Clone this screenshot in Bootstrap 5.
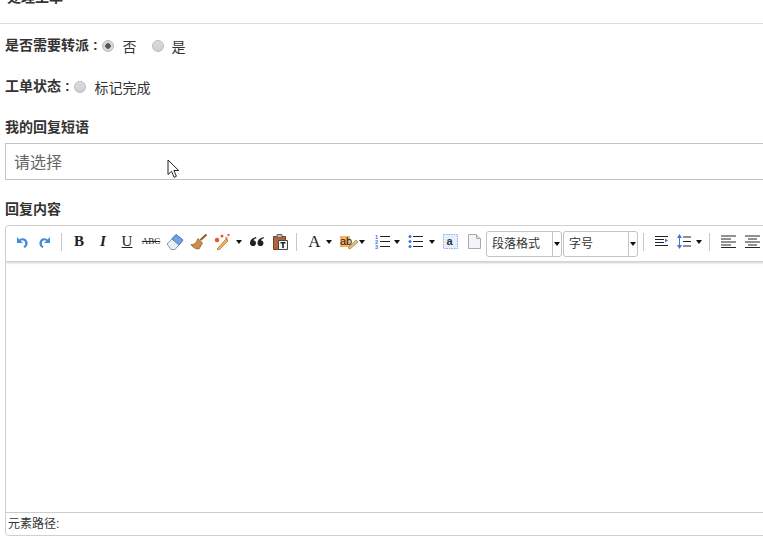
<!DOCTYPE html>
<html lang="en">
<head>
  <meta charset="UTF-8" />
  <title>处理工单</title>
  <link href="https://cdn.jsdelivr.net/npm/bootstrap@5.3.0/dist/css/bootstrap.min.css" rel="stylesheet" />
  <style>
    html, body { height: 537px; overflow: hidden; background: #fff; }
    body { font-family: "Liberation Sans", "Noto Sans CJK SC", sans-serif; font-size: 14px; color: #333; position: relative; }
    .page-wrap { width: 810px; margin-top: -12px; padding-left: 5px; }
    .page-head { height: 36px; margin-left: -5px; padding-left: 7px; border-bottom: 1px solid #ddd; font-weight: 700; font-size: 14px; line-height: 18px; }
    .field-row { height: 20px; line-height: 20px; }
    .field-label { font-weight: 700; color: #333; font-size: 14px; }
    .field-row > .field-label { margin-bottom: 2px; }
    .radio-text { margin-top: 2px; }
    .row-send { margin-top: 12px; }
    .row-state { margin-top: 21px; }
    .row-phrase { margin-top: 20px; }
    .row-reply { margin-top: 19px; }
    .fake-radio { appearance: none; width: 12px; height: 12px; border-radius: 50%; border: 1px solid #bbb; background: linear-gradient(#dcdcdc, #cfcfcf); flex: none; margin: 0 9px 0 4px; }
    .fake-radio:checked { background: radial-gradient(circle, #555 0 2.5px, #d8d8d8 3px); }
    .second-radio { margin-left: 15px; margin-right: 8px; }
    .phrase-box { height: 37px; margin-top: 6px; border: 1px solid #c4c4c4; padding-left: 8px; line-height: 37px; font-size: 16px; color: #666; }
    .editor-box { height: 311px; margin-top: 6px; border: 1px solid #d0d0d0; border-radius: 4px; display: flex; flex-direction: column; }
    .editor-bar { height: 36px; flex: none; padding-left: 4px; border-bottom: 1px solid #d4d4d4; box-shadow: 0 1px 2px #ccc; }
    .editor-body { flex: 1; }
    .editor-foot { height: 23px; flex: none; border-top: 1px solid #ccc; padding-left: 2px; font-size: 12px; line-height: 22px; color: #333; }
    .tool { width: 24px; height: 20px; flex: none; display: flex; align-items: center; justify-content: center; font-family: "Liberation Serif", serif; color: #222; font-size: 15px; line-height: 1; margin-bottom: 4px; }
    .tool-sm { width: 23px; }
    .tool-arrow { width: 0; height: 0; flex: none; border: 3px solid transparent; border-top: 4px solid #111; border-bottom: 0; margin: 0 1px 4px; }
    .tool-sep { width: 1px; height: 18px; flex: none; background: #c8c8c8; margin-bottom: 4px !important; }
    .combo { height: 26px; flex: none; border: 1px solid #c4c4c4; border-radius: 3px; display: flex; font-size: 12px; color: #333; line-height: 25px; }
    .combo-text { padding-left: 5px; border-right: 1px solid #c4c4c4; }
    .combo-drop { width: 8px; display: flex; align-items: center; justify-content: center; }
    .mouse-arrow { position: absolute; left: 167px; top: 159px; }
  </style>
</head>
<body>
  <div class="page-wrap">
    <div class="page-head">处理工单</div>

    <div class="field-row row-send d-flex align-items-center">
      <span class="field-label">是否需要转派 :</span>
      <input class="fake-radio" type="radio" name="send" checked />
      <span class="radio-text">否</span>
      <input class="fake-radio second-radio" type="radio" name="send" />
      <span class="radio-text">是</span>
    </div>

    <div class="field-row row-state d-flex align-items-center">
      <span class="field-label">工单状态 :</span>
      <input class="fake-radio" type="radio" />
      <span class="radio-text">标记完成</span>
    </div>

    <div class="field-row row-phrase field-label">我的回复短语</div>
    <div class="phrase-box">请选择</div>

    <div class="field-row row-reply field-label">回复内容</div>
    <div class="editor-box">
      <div class="editor-bar d-flex align-items-center">
        <span class="tool tool-sm"><svg width="16" height="16" viewBox="1 0 16 16"><path d="M4 3v6h6L7.600 6.800C9.500 5.600 12 6.600 12.200 9c.1 1.300-.5 2.600-1.700 3.500l1 1.500c2.500-1.300 3.500-3.500 3-5.800C13.700 4.500 9.500 3 6.400 5.600z" fill="#3f8ddb"/></svg></span>
        <span class="tool tool-sm"><svg width="16" height="16" viewBox="-1 0 16 16"><path d="M12 3v6H6l2.400-2.200C6.500 5.600 4 6.600 3.800 9c-.1 1.300.5 2.600 1.700 3.500l-1 1.500C2 12.700 1 10.500 1.500 8.200 2.300 4.500 6.500 3 9.600 5.600z" fill="#3f8ddb"/></svg></span>
        <span class="tool-sep" style="margin:0 5px"></span>
        <span class="tool fw-bold">B</span>
        <span class="tool fst-italic fw-bold">I</span>
        <span class="tool text-decoration-underline">U</span>
        <span class="tool text-decoration-line-through" style="font-size:9px">ABC</span>
        <span class="tool"><svg width="18" height="18" viewBox="0 0 18 18"><path d="M1 11 10 1.500 17 7l-8 9.500H5z" fill="#eeeef2" stroke="#8a94a8"/><path d="M6 6 10 1.500 17 7l-4 5z" fill="#6fa5e8" stroke="#4d7fc0"/></svg></span>
        <span class="tool"><svg width="18" height="18" viewBox="0 0 18 18"><path d="M16.500 1.500 10.500 7" stroke="#8a5a2a" stroke-width="2"/><path d="M8 5.500 12.500 10 9 16c-3 .2-6.500-1.500-8-4.500 3 .5 5-1 7-6z" fill="#c98d4d" stroke="#8a5a2a" stroke-width=".7"/></svg></span>
        <span class="tool" style="width:20px;margin-left:1px"><svg width="18" height="18" viewBox="0 0 18 18"><path d="M4 16 13 6l2 2-9 9z" fill="#efb45a" stroke="#a8702c" stroke-width=".7"/><path d="M12 3l1 1.500L14.800 4 14 5.700l1 1.300-1.800-.3" fill="#e0592a"/><circle cx="4" cy="7" r="2.200" fill="#e0592a"/><circle cx="9" cy="3" r="1.500" fill="#e0592a"/><circle cx="15.500" cy="2" r="1.200" fill="#d85a9a"/></svg></span>
        <span class="tool-arrow" style="margin-left:4px"></span>
        <span class="tool" style="width:22px;margin-left:3px"><svg width="14" height="9" viewBox="0 0 14 9"><path d="M6 0C2.500 1 0 3 0 6a3 3 0 1 0 3.500-2.800C4 2.300 5 1.600 6.500 1.200zM13.500 0C10 1 7.500 3 7.500 6a3 3 0 1 0 3.500-2.800c.5-.9 1.500-1.600 3-2z" fill="#222"/></svg></span>
        <span class="tool"><svg width="15" height="16" viewBox="0 0 15 16"><path d="M.5 2.500h12v13H.5z" fill="#b5623a" stroke="#7a3f22"/><path d="M4 .5h5v3H4z" fill="#bbb" stroke="#666"/><path d="M5.500 6.500h9v9h-9z" fill="#f4f4f4" stroke="#444"/><path d="M7.500 8h5v1.500h-1.700V14H9.200V9.500H7.500z" fill="#222"/></svg></span>
        <span class="tool-sep" style="margin:0 7px 0 4px"></span>
        <span class="tool" style="width:21px;font-size:17px">A</span>
        <span class="tool-arrow" style="margin-left:1px;margin-right:4px"></span>
        <span class="tool" style="width:23px"><svg width="20" height="16" viewBox="-1 0 20 16"><path d="M1 2h10v11H1z" fill="#f5b35f"/><text x="1" y="11" font-size="11" font-family="Liberation Sans" fill="#222">ab</text><path d="M9 14l8-8 2 2-8 7z" fill="#e8c070" stroke="#8a6a2a" stroke-width=".6"/></svg></span>
        <span class="tool-arrow" style="margin-left:0;margin-right:7px"></span>
        <span class="tool" style="width:21px"><svg width="15" height="15" viewBox="0 0 15 15"><path d="M5 2.500h10M5 7.500h10M5 12.500h10" stroke="#222"/><text x="0" y="5" font-size="5.500" font-weight="700" font-family="Liberation Sans" fill="#3f74e0">1</text><text x="0" y="10" font-size="5.500" font-weight="700" font-family="Liberation Sans" fill="#3f74e0">2</text><text x="0" y="15" font-size="5.500" font-weight="700" font-family="Liberation Sans" fill="#3f74e0">3</text></svg></span>
        <span class="tool-arrow" style="margin-left:1px;margin-right:5px"></span>
        <span class="tool" style="width:21px;margin-right:-1px"><svg width="15" height="15" viewBox="0 0 15 15"><path d="M5 2.500h10M5 7.500h10M5 12.500h10" stroke="#222"/><circle cx="2" cy="2.500" r="1.500" fill="#3f74e0"/><circle cx="2" cy="7.500" r="1.500" fill="#3f74e0"/><circle cx="2" cy="12.500" r="1.500" fill="#3f74e0"/></svg></span>
        <span class="tool-arrow" style="margin-left:4px;margin-right:3px"></span>
        <span class="tool" style="width:24px"><svg width="15" height="15" viewBox="0 0 15 15"><rect x=".5" y=".5" width="14" height="14" fill="#e6eefb" stroke="#8fb0e8" stroke-dasharray="1.500 1"/><text x="3.500" y="11" font-size="11" font-weight="700" font-family="Liberation Sans" fill="#333">a</text></svg></span>
        <span class="tool" style="width:24px"><svg width="13" height="15" viewBox="0 0 13 15"><path d="M.5.500h8l4 4v10H.5z" fill="#f2f4fa" stroke="#aaa"/><path d="M8.500.5v4h4" fill="#dde" stroke="#aaa"/></svg></span>
        <span class="combo" style="width:76px"><span class="combo-text" style="width:66px">段落格式</span><span class="combo-drop"><span class="tool-arrow m-0"></span></span></span>
        <span class="combo" style="width:75px;margin-left:1px"><span class="combo-text" style="width:65px">字号</span><span class="combo-drop"><span class="tool-arrow m-0"></span></span></span>
        <span class="tool-sep" style="margin:0 7px 0 5px"></span>
        <span class="tool" style="width:21px"><svg width="14" height="14" viewBox="0 0 14 14"><path d="M0 1.500h13M0 4.500h9M0 7.500h9M0 10.500h13" stroke="#222" stroke-width="1.200"/><path d="M10 3.500v4l3-2z" fill="#3f74e0"/></svg></span>
        <span class="tool" style="width:24px"><svg width="14" height="15" viewBox="0 0 14 15"><path d="M6 3h8M6 7.500h8M6 12h8" stroke="#222"/><path d="M2.500 0l2.500 4H0zM2.500 15l2.500-4H0z" fill="#3f74e0"/><path d="M2 4h1v7H2z" fill="#3f74e0"/></svg></span>
        <span class="tool-arrow" style="margin-left:0"></span>
        <span class="tool-sep" style="margin:0 6px 0 6px"></span>
        <span class="tool"><svg width="15" height="13" viewBox="0 0 15 13"><path d="M0 1h15M0 4h10M0 7h15M0 10h10M0 12.500h15" stroke="#222"/></svg></span>
        <span class="tool"><svg width="15" height="13" viewBox="0 0 15 13"><path d="M0 1h15M3 4h9M0 7h15M3 10h9M0 12.500h15" stroke="#222"/></svg></span>
      </div>
      <div class="editor-body"></div>
      <div class="editor-foot">元素路径:</div>
    </div>
  </div>

  <svg class="mouse-arrow" width="14" height="20" viewBox="0 0 14 20"><path d="M1 1v14.500l3.500-3.200 2.600 6 2.300-1-2.500-5.800h4.800z" fill="#fff" stroke="#222"/></svg>
</body>
</html>
